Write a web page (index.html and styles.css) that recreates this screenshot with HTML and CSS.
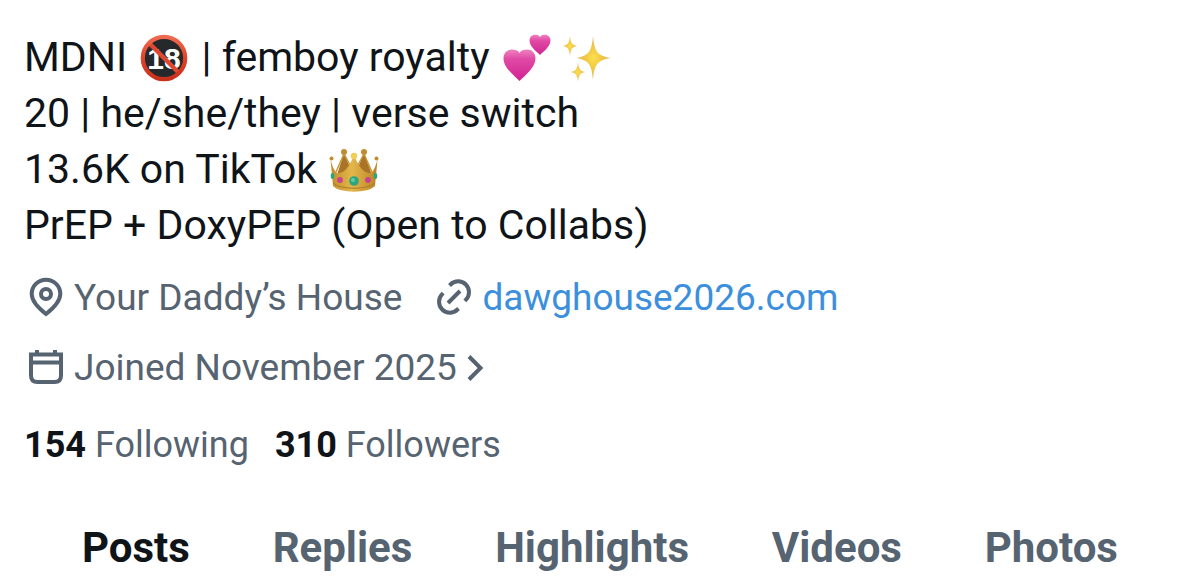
FILE: index.html
```
<!DOCTYPE html>
<html lang="en">
<head>
<meta charset="utf-8">
<meta name="viewport" content="width=device-width, initial-scale=1">
<title>Profile</title>
<link rel="stylesheet" href="styles.css">
</head>
<body>
<main class="profile">
  <section class="details">
    <p class="bio">MDNI
      <svg class="emoji" viewBox="0 0 50 50" role="img" aria-label="No one under eighteen">
        <defs>
          <linearGradient id="ring" x1="0" y1="0" x2="0" y2="1"><stop offset="0" stop-color="#ee6a50"/><stop offset=".5" stop-color="#e0432a"/><stop offset="1" stop-color="#c9301c"/></linearGradient>
        </defs>
        <circle cx="25" cy="25" r="20" fill="#25292c"/>
        <text class="age" x="25" y="36" text-anchor="middle">18</text>
        <path d="M10 10L40 40" stroke="#df4930" stroke-width="4.5"/>
        <circle cx="25" cy="25" r="21.200" fill="none" stroke="url(#ring)" stroke-width="4.200"/>
      </svg>
      | femboy royalty
      <svg class="emoji" viewBox="0 0 50 50" role="img" aria-label="Two hearts">
        <defs>
          <linearGradient id="heart" x1="0" y1="0" x2="0" y2="1"><stop offset="0" stop-color="#ee82be"/><stop offset=".3" stop-color="#e04aa6"/><stop offset="1" stop-color="#d12291"/></linearGradient>
        </defs>
        <path fill="url(#heart)" d="M17.500 48C12 42.500 1.500 34.500 1.500 25.500C1.500 20 5.200 16.600 9.600 16.600C13.500 16.600 16.200 17.500 17.500 20C18.800 17.500 21.500 16.600 25.400 16.600C29.800 16.600 33.500 20 33.500 25.500C33.500 34.500 23 42.500 17.500 48Z"/>
        <path fill="url(#heart)" d="M38 22C34.500 18.500 27.500 13.500 27.500 7.500C27.500 4 30 1.700 32.800 1.700C35.300 1.700 37.200 2.300 38 4C38.800 2.300 40.700 1.700 43.200 1.700C46 1.700 48.500 4 48.500 7.500C48.500 13.500 41.500 18.500 38 22Z"/>
      </svg><svg class="emoji emoji-next" viewBox="0 0 50 50" role="img" aria-label="Sparkles">
        <defs>
          <radialGradient id="spark"><stop offset="0" stop-color="#fbe04e"/><stop offset=".5" stop-color="#f0c744"/><stop offset="1" stop-color="#e3b36c"/></radialGradient>
        </defs>
        <g fill="url(#spark)">
          <path d="M31 3C32.500 18 34.500 22.500 48.500 25C34.500 27.500 32.500 32 31 47C29.500 32 27.500 27.500 14.500 25C27.500 22.500 29.500 18 31 3Z"/>
          <path d="M8 3C8.800 10 10 12 15 13C10 14 8.800 16 8 23C7.200 16 6 14 1 13C6 12 7.200 10 8 3Z"/>
          <path d="M16 29.500C16.800 36 18 38 23 39C18 40 16.800 42 16 48.500C15.200 42 14 40 9 39C14 38 15.200 36 16 29.500Z"/>
        </g>
      </svg><br>
      20 | he/she/they | verse switch<br>
      13.6K on TikTok
      <svg class="emoji" viewBox="0 0 50 50" role="img" aria-label="Crown">
        <defs>
          <linearGradient id="gold" x1="0" y1="0" x2="1" y2="0"><stop offset="0" stop-color="#c28d2b"/><stop offset=".45" stop-color="#e3b64b"/><stop offset="1" stop-color="#bb8426"/></linearGradient>
        </defs>
        <path fill="#a97426" d="M8 30L15 8L22 25L28 25L35 8L43 30Z"/>
        <path fill="none" stroke="#c79636" stroke-width="1.500" d="M7 27L15 9L21 20M29 20L35 9L43 27"/>
        <path fill="url(#gold)" d="M1.500 14.500C4 23 6 27.500 9 28C15 28.500 21 21 25 10C29 21 35 28.500 41 28C44 27.500 46 23 48.500 14.500L46 41C39 48.500 11 48.500 4 41Z"/>
        <path fill="none" stroke="#a97927" d="M4 38C11 45 39 45 46 38"/>
        <g fill="#c18c30"><circle cx="2.500" cy="13.500" r="2"/><circle cx="47.500" cy="13.500" r="2"/><circle cx="15" cy="7" r="3"/><circle cx="35" cy="7" r="3"/></g>
        <circle cx="25" cy="11" r="3.300" fill="#f0ce57"/>
        <circle cx="25" cy="36" r="4.800" fill="#2da67e"/><circle cx="24" cy="35" r="2" fill="#64c9a3"/>
        <circle cx="11" cy="35" r="2.900" fill="#c9418f"/><circle cx="39" cy="35" r="2.900" fill="#c9418f"/>
        <ellipse cx="3.500" cy="31" rx="1.800" ry="3" fill="#2da67e"/><ellipse cx="46.500" cy="31" rx="1.800" ry="3" fill="#2da67e"/>
      </svg><br>
      PrEP + DoxyPEP (Open to Collabs)</p>

    <div class="facts">
      <div class="facts-row">
        <span class="fact">
          <svg class="icon" viewBox="0 0 44 44" aria-hidden="true"><path d="M22 38C15 32.500 7.700 26 7.700 18C7.700 10 14 3.800 22 3.800S36.300 10 36.300 18C36.300 26 29 32.500 22 38Z"/><circle cx="22" cy="18" r="5"/></svg>
          Your Daddy’s House
        </span>
        <span class="fact">
          <svg class="icon" viewBox="0 0 44 44" aria-hidden="true"><path d="M17.500 9.500l1-1a10.800 10.800 0 0 1 15.300 15.300l-1 1M26.500 32.500l-1 1a10.800 10.800 0 0 1-15.300-15.300l1-1M16 27L28 15"/></svg>
          <a class="site" href="#site">dawghouse2026.com</a>
        </span>
      </div>
      <div class="facts-row">
        <button class="fact joined" type="button">
          <svg class="icon" viewBox="0 0 44 44" aria-hidden="true"><path d="M7 8.500H37V29.500Q37 36 30.500 36H13.500Q7 36 7 29.500ZM7 16.500H37M13 4V8.500M31 4V8.500"/></svg>
          Joined November 2025
          <svg class="chevron" viewBox="0 0 18 44" aria-hidden="true"><path d="M2 10.500L13.500 22L2 33.500"/></svg>
        </button>
      </div>
    </div>

    <div class="stats">
      <a class="stat" href="#following"><strong>154</strong> Following</a>
      <a class="stat" href="#followers"><strong>310</strong> Followers</a>
    </div>
  </section>

  <nav class="tabs" aria-label="Profile sections">
    <a class="tab tab-active" href="#posts" aria-current="page">Posts</a>
    <a class="tab" href="#replies">Replies</a>
    <a class="tab" href="#highlights">Highlights</a>
    <a class="tab" href="#videos">Videos</a>
    <a class="tab" href="#photos">Photos</a>
  </nav>
</main>
</body>
</html>
```
FILE: styles.css
```
:root {
  --ink: #0f1419;
  --muted: #566370;
  --link: #3c8fdc;
}

* {
  box-sizing: border-box;
}

body {
  margin: 0;
  background: #fff;
  color: var(--ink);
  font-family: Roboto, "Liberation Sans", sans-serif;
}

.details {
  padding: 29px 24px 0;
}

.bio {
  margin: 0;
  font-size: 41px;
  line-height: 56px;
}

.emoji {
  width: 50px;
  height: 50px;
  margin: -4px 2px;
  vertical-align: -8px;
}

.emoji-next {
  margin-left: 8px;
}

.age {
  fill: #fff;
  font: bold 30px "Liberation Sans", sans-serif;
}

.facts {
  display: flex;
  flex-direction: column;
  gap: 26px;
  margin-top: 23px;
}

.facts-row {
  display: flex;
  flex-wrap: wrap;
  gap: 30px;
}

.fact {
  display: flex;
  align-items: center;
  gap: 6px;
  color: var(--muted);
  font-size: 37px;
  line-height: 44px;
}

.joined {
  padding: 0;
  border: 0;
  background: none;
  font-family: inherit;
  cursor: pointer;
}

.icon,
.chevron {
  flex: none;
  height: 44px;
  fill: none;
  stroke: currentColor;
  stroke-width: 4;
}

.icon {
  width: 44px;
}

.chevron {
  width: 18px;
  margin-left: 4px;
}

.site {
  color: var(--link);
  text-decoration: none;
}

.stats {
  display: flex;
  flex-wrap: wrap;
  gap: 26px;
  margin-top: 33px;
}

.stat {
  color: var(--muted);
  font-size: 36px;
  line-height: 44px;
  text-decoration: none;
}

.stat strong {
  color: var(--ink);
}

.tabs {
  display: flex;
  justify-content: space-between;
  margin-top: 57px;
  padding: 0 82px 16px;
}

.tab {
  color: var(--muted);
  font-size: 42px;
  font-weight: 700;
  line-height: 48px;
  text-decoration: none;
}

.tab-active {
  color: var(--ink);
}
```
